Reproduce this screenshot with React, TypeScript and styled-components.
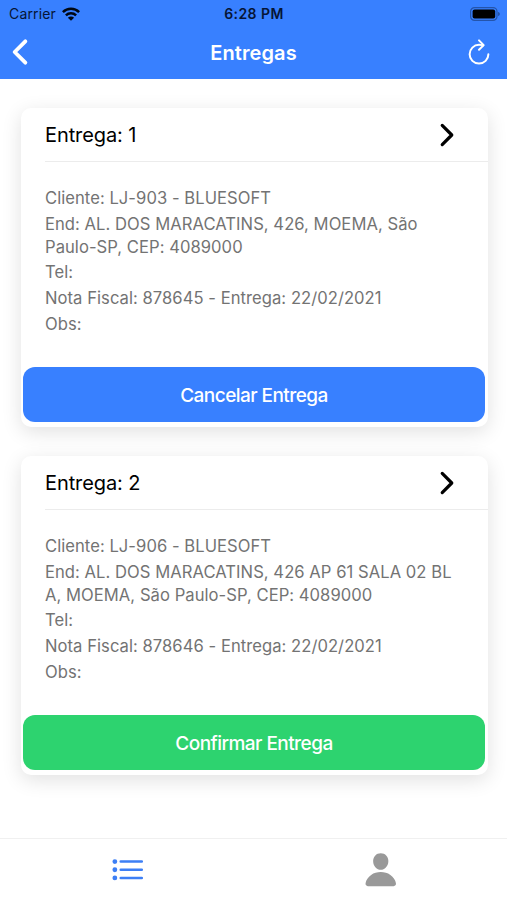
import React from "react";
import styled, { createGlobalStyle } from "styled-components";

const GlobalStyle = createGlobalStyle`
  * { box-sizing: border-box; }
  body {
    margin: 0;
    background: #fff;
    font-family: Inter, "Liberation Sans", sans-serif;
    overflow: hidden;
  }
`;

const Screen = styled.div`
  display: flex;
  flex-direction: column;
  width: 507px;
  height: 900px;
  background: #fff;
`;

const Header = styled.header`
  flex: none;
  height: 79px;
  background: #3880ff;
`;

const StatusBar = styled.div`
  display: grid;
  grid-template-columns: 1fr auto 1fr;
  align-items: center;
  height: 27px;
  padding: 0 8px 0 9px;
  color: #061536;
`;

const Carrier = styled.div`
  display: flex;
  align-items: center;
  gap: 6px;
  font-size: 14px;
  letter-spacing: 0.15px;
`;

const Clock = styled.div`
  font-size: 14px;
  font-weight: 600;
  letter-spacing: 0.45px;
`;

const Battery = styled.svg`
  justify-self: end;
  margin-right: -1px;
`;

const Toolbar = styled.div`
  display: grid;
  grid-template-columns: 1fr auto 1fr;
  align-items: center;
  height: 50px;
`;

const Title = styled.h1`
  margin: 1px 0 0;
  color: #fff;
  font-size: 20px;
  font-weight: 600;
  line-height: 26px;
  letter-spacing: 0.1px;
`;

const IconButton = styled.button<{ $end?: boolean }>`
  display: flex;
  justify-self: ${(p) => (p.$end ? "end" : "start")};
  margin: ${(p) => (p.$end ? "0 13.5px 0 0" : "0 0 0 1px")};
  padding: 0;
  border: 0;
  background: none;
  color: #fff;
`;

const Icon = styled.svg<{ $size: number }>`
  display: block;
  width: ${(p) => p.$size}px;
  height: ${(p) => p.$size}px;
  fill: none;
  stroke: currentColor;
  stroke-linecap: round;
  stroke-linejoin: round;
`;

const Content = styled.main`
  flex: 1;
  display: flex;
  flex-direction: column;
  gap: 29px;
  padding: 29px 19px 0 20.5px;
`;

const Card = styled.article`
  display: flex;
  flex-direction: column;
  height: 319px;
  padding-bottom: 5px;
  border-radius: 10px;
  background: #fff;
  box-shadow: 0 5px 20px rgba(0, 0, 0, 0.12);
`;

const CardHeader = styled.div`
  display: flex;
  align-items: center;
  justify-content: space-between;
  height: 54px;
  margin-left: 24.5px;
  padding-right: 24.5px;
  border-bottom: 1px solid #ececec;
  color: #000;
`;

const CardTitle = styled.h2`
  margin: 0;
  font-size: 20px;
  font-weight: 400;
  letter-spacing: -0.1px;
`;

const Details = styled.div`
  flex: 1;
  display: flex;
  flex-direction: column;
  gap: 2.6px;
  padding: 25.2px 20px 0 24.5px;
  color: #737373;
`;

const Line = styled.p`
  margin: 0;
  font-size: 16.6px;
  line-height: 23px;
  white-space: nowrap;
  letter-spacing: 0.045px;
`;

const ActionButton = styled.button<{ $color: string }>`
  height: 55px;
  margin: 0 3px 0 2.5px;
  padding: 2px 0 0;
  border: 0;
  border-radius: 12px;
  background: ${(p) => p.$color};
  color: #fff;
  font-family: inherit;
  font-size: 19px;
  font-weight: 500;
  letter-spacing: -0.55px;
`;

const TabBar = styled.nav`
  display: grid;
  grid-template-columns: 1fr 1fr;
  height: 62px;
  padding-left: 1px;
  border-top: 1px solid #f0f0f0;
  background: #fff;
`;

const Tab = styled.button<{ $active?: boolean }>`
  display: flex;
  align-items: center;
  justify-content: center;
  padding: 0;
  border: 0;
  background: none;
  color: ${(p) => (p.$active ? "#3d7ff5" : "#999")};
`;

type Delivery = {
  id: number;
  lines: React.ReactNode[];
  action: string;
  color: string;
};

const deliveries: Delivery[] = [
  {
    id: 1,
    lines: [
      "Cliente: LJ-903 - BLUESOFT",
      <>End: AL. DOS MARACATINS, 426, MOEMA, São<br />Paulo-SP, CEP: 4089000</>,
      "Tel:",
      "Nota Fiscal: 878645 - Entrega: 22/02/2021",
      "Obs:",
    ],
    action: "Cancelar Entrega",
    color: "#3880ff",
  },
  {
    id: 2,
    lines: [
      "Cliente: LJ-906 - BLUESOFT",
      <>End: AL. DOS MARACATINS, 426 AP 61 SALA 02 BL<br />A, MOEMA, São Paulo-SP, CEP: 4089000</>,
      "Tel:",
      "Nota Fiscal: 878646 - Entrega: 22/02/2021",
      "Obs:",
    ],
    action: "Confirmar Entrega",
    color: "#2dd36f",
  },
];

function DeliveryCard({ delivery }: { delivery: Delivery }) {
  return (
    <Card>
      <CardHeader>
        <CardTitle>Entrega: {delivery.id}</CardTitle>
        <Icon $size={34} viewBox="0 0 512 512" strokeWidth="48">
          <path d="M184 112l144 144-144 144" />
        </Icon>
      </CardHeader>
      <Details>
        {delivery.lines.map((line, i) => (
          <Line key={i}>{line}</Line>
        ))}
      </Details>
      <ActionButton $color={delivery.color}>{delivery.action}</ActionButton>
    </Card>
  );
}

export default function App() {
  return (
    <Screen>
      <GlobalStyle />
      <Header>
        <StatusBar>
          <Carrier>
            <span>Carrier</span>
            <svg width="18" height="14" viewBox="0 0 18 14" fill="none" stroke="#000814" strokeWidth="2.5">
              <path d="M0.9 5.1a11.5 11.5 0 0 1 16.2 0" />
              <path d="M3.9 8.3a7.3 7.3 0 0 1 10.2 0" />
              <path d="M9 13.8L5.9 10.7a4.4 4.4 0 0 1 6.2 0z" fill="#000814" stroke="none" />
            </svg>
          </Carrier>
          <Clock>6:28 PM</Clock>
          <Battery width="30" height="14" viewBox="0 0 30 14">
            <rect x="0.6" y="0.6" width="26.4" height="12.8" rx="4" fill="none" stroke="#2454ab" strokeWidth="1.2" />
            <rect x="2.6" y="2.4" width="22.6" height="9.2" rx="2" fill="#000" />
            <path d="M28.2 5v4c1-.3 1.5-1.100 1.500-2s-.5-1.700-1.500-2z" fill="#1f4a98" />
          </Battery>
        </StatusBar>
        <Toolbar>
          <IconButton aria-label="Voltar">
            <Icon $size={38} viewBox="0 0 512 512" strokeWidth="52">
              <path d="M328 112L184 256l144 144" />
            </Icon>
          </IconButton>
          <Title>Entregas</Title>
          <IconButton $end aria-label="Atualizar">
            <Icon $size={30} viewBox="0 0 512 512" strokeWidth="34">
              <path d="M320 146s24.360-12-64-12a160 160 0 1 0 160 160" />
              <path d="M256 58l80 80-80 80" />
            </Icon>
          </IconButton>
        </Toolbar>
      </Header>
      <Content>
        {deliveries.map((d) => (
          <DeliveryCard key={d.id} delivery={d} />
        ))}
      </Content>
      <TabBar>
        <Tab $active aria-label="Lista">
          <Icon $size={37.5} viewBox="0 0 512 512" strokeWidth="34">
            <path d="M160 144h288M160 256h288M160 368h288" />
            <circle cx="80" cy="144" r="16" />
            <circle cx="80" cy="256" r="16" />
            <circle cx="80" cy="368" r="16" />
          </Icon>
        </Tab>
        <Tab aria-label="Perfil">
          <Icon $size={37.5} viewBox="0 0 512 512">
            <path
              fill="currentColor"
              stroke="none"
              d="M332.640 64.580C313.180 43.570 286 32 256 32c-30.160 0-57.430 11.500-76.800 32.380-19.580 21.110-29.120 49.800-26.880 80.780C156.760 206.280 203.270 256 256 256s99.160-49.710 103.670-110.820c2.270-30.700-7.330-59.330-27.030-80.600zM432 480H80a31 31 0 0 1-24.200-11.130c-6.500-7.770-9.120-18.380-7.180-29.110C57.060 392.940 83.400 353.610 124.800 326c36.780-24.510 83.370-38 131.200-38s94.420 13.500 131.200 38c41.400 27.600 67.740 66.930 76.180 113.750 1.940 10.730-.68 21.340-7.180 29.110A31 31 0 0 1 432 480z"
            />
          </Icon>
        </Tab>
      </TabBar>
    </Screen>
  );
}
